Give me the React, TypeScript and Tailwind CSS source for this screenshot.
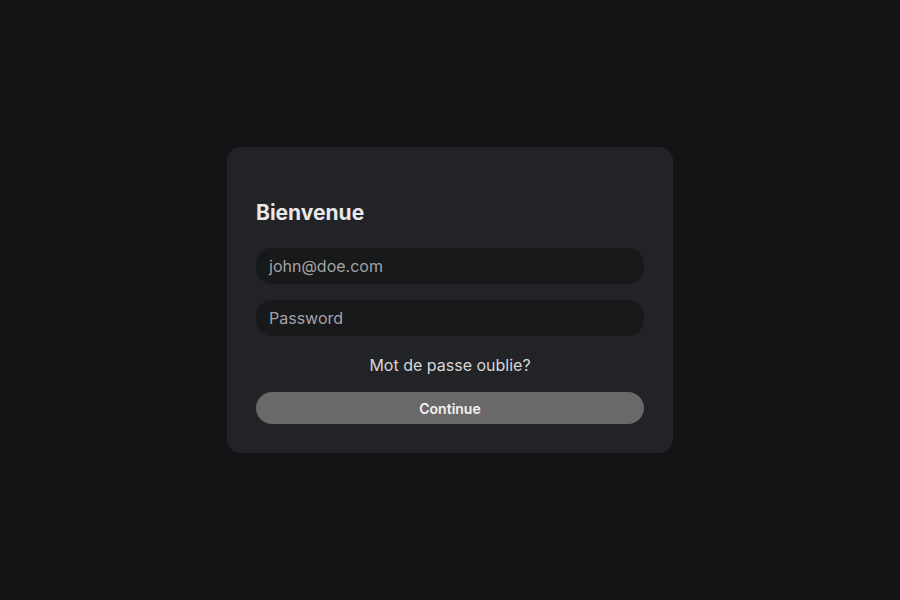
export default function App() {
  return (
    <div className="w-[900px] h-[600px] bg-[#131416] flex items-center justify-center" style={{ fontFamily: "Inter, 'Noto Sans', sans-serif" }}>
      <div className="w-[446px] h-[306px] bg-[#222327] rounded-[14px] px-[29px] pt-[52px] flex flex-col">
        <h1 className="text-[21px] leading-[28px] font-bold text-[#e8e8ea]">Bienvenue</h1>
        <div className="mt-[21px] h-[36px] rounded-[16px] bg-[#18191b] flex items-center px-[13px] text-[16px] text-[#a3a3a6]">john@doe.com</div>
        <div className="mt-[16px] h-[36px] rounded-[16px] bg-[#18191b] flex items-center px-[13px] text-[16px] text-[#a3a3a6]">Password</div>
        <div className="mt-[17px] text-center text-[16px] leading-[24px] text-[#d6d6d8]">Mot de passe oublie?</div>
        <button className="mt-[15px] h-[32px] rounded-full bg-[#6a6869] text-[14px] font-semibold text-[#f2f2f2]">Continue</button>
      </div>
    </div>
  );
}
